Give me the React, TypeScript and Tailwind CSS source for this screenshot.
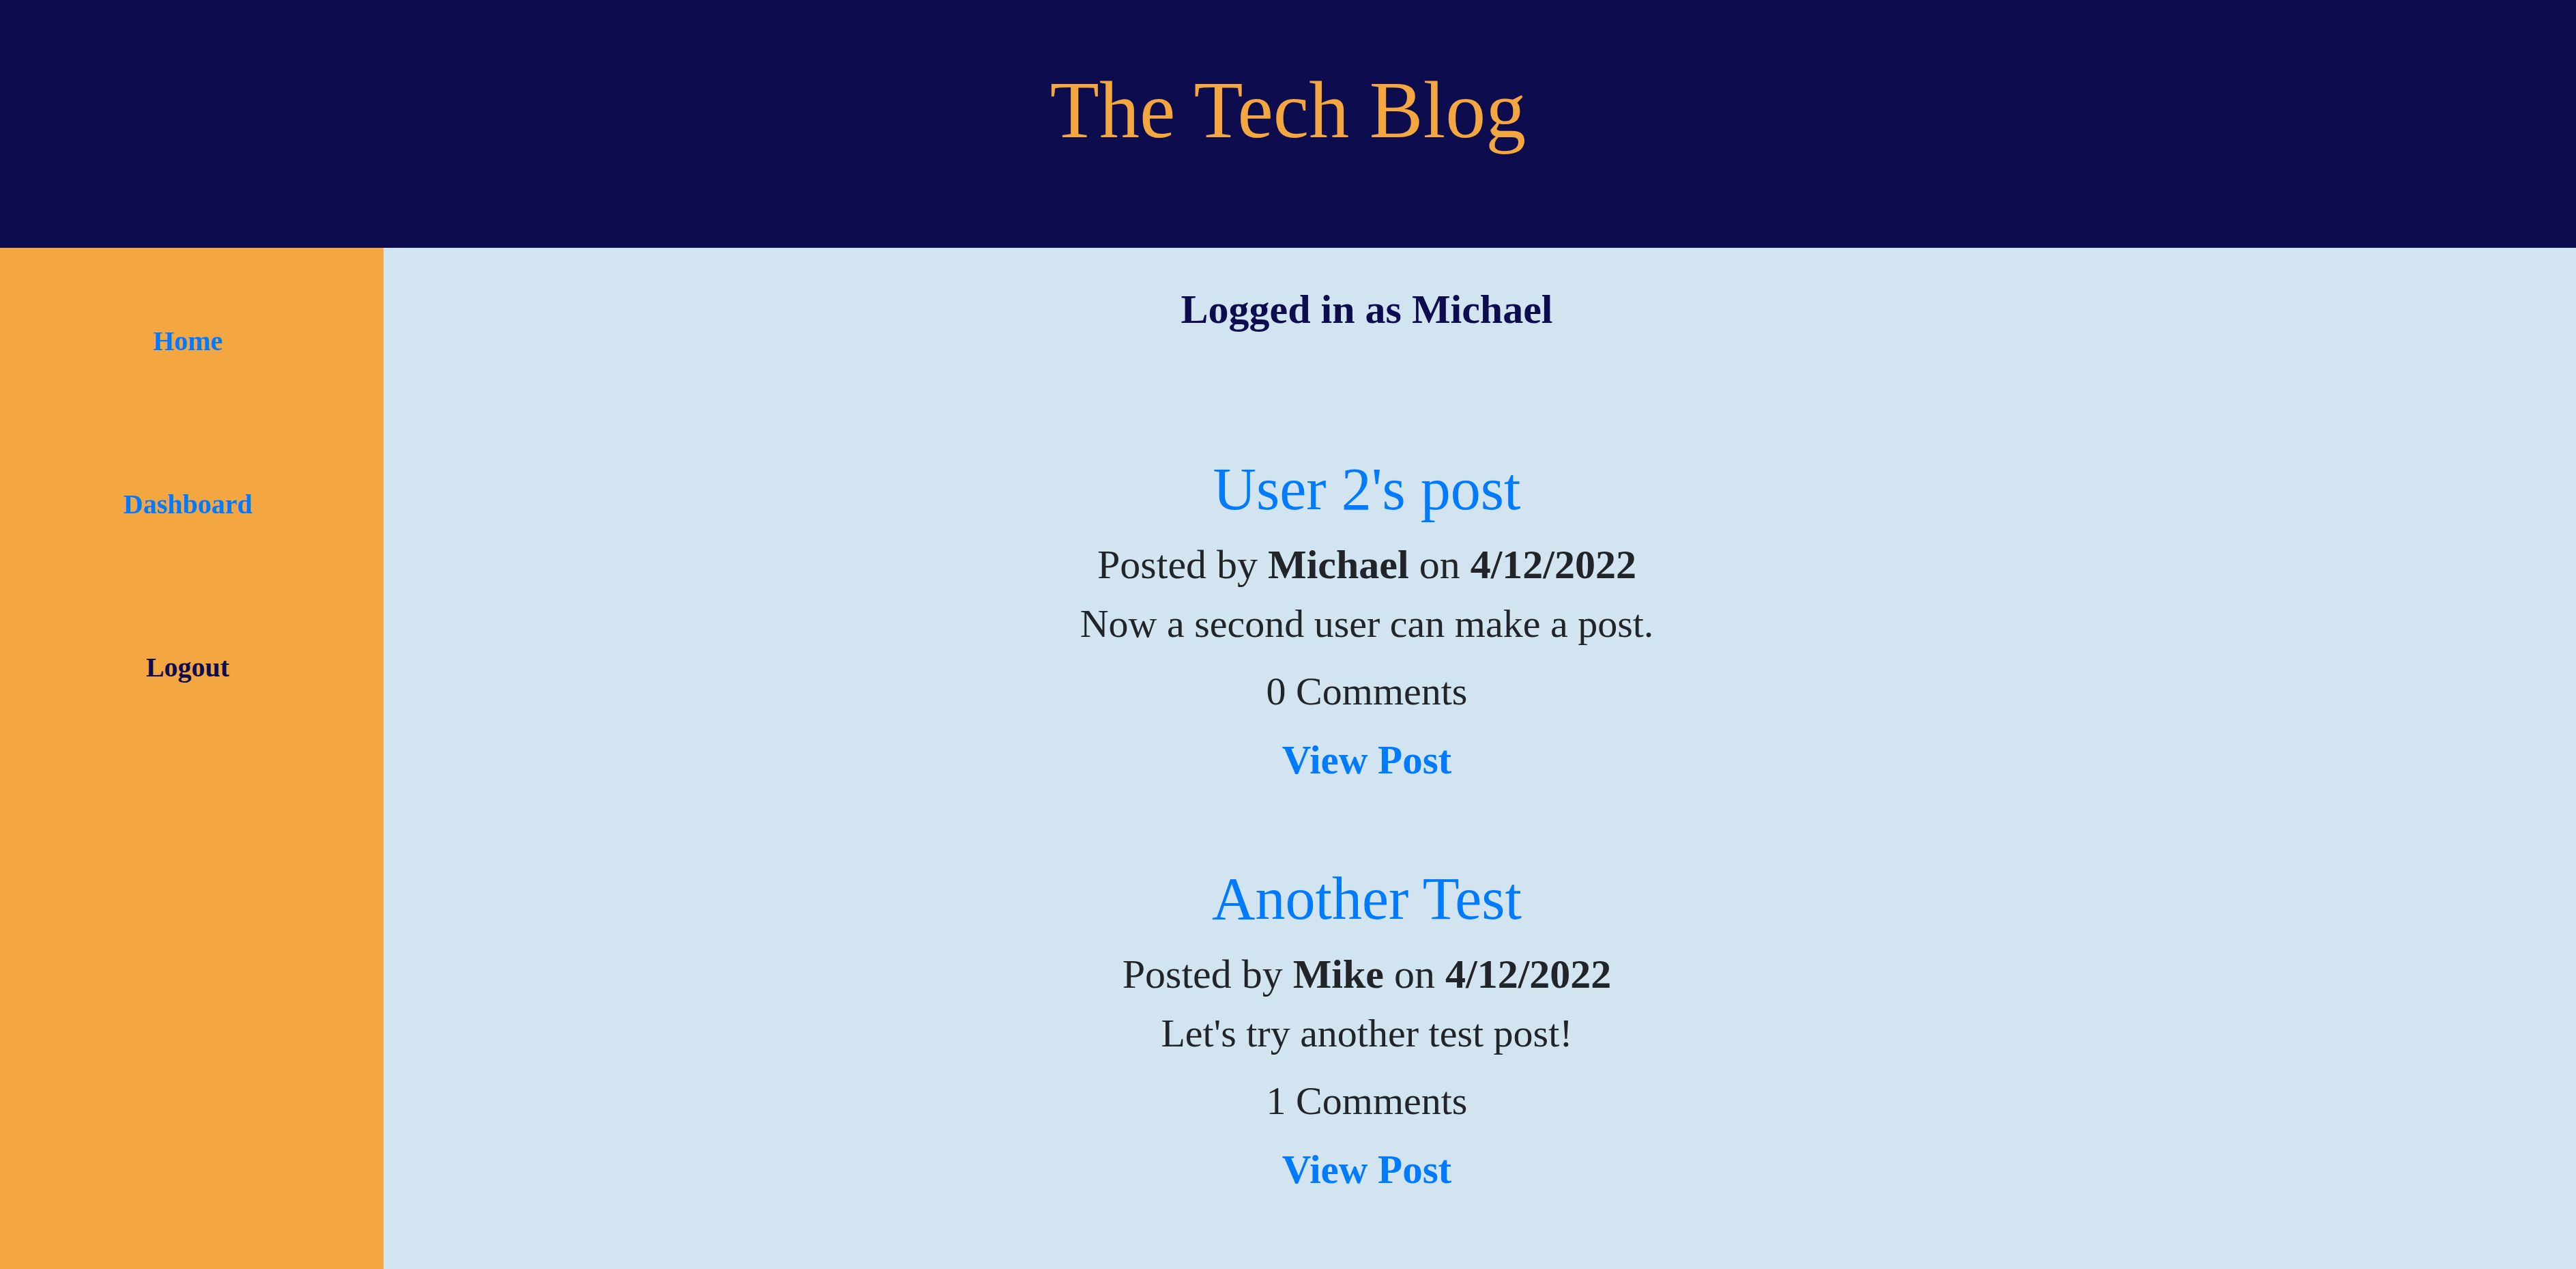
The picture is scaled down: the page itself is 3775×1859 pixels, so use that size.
import React from "react";

const posts = [
  {
    title: "User 2's post",
    author: "Michael",
    date: "4/12/2022",
    body: "Now a second user can make a post.",
    comments: 0,
  },
  {
    title: "Another Test",
    author: "Mike",
    date: "4/12/2022",
    body: "Let's try another test post!",
    comments: 1,
  },
];

export default function App() {
  return (
    <div className="min-h-[1859px] flex flex-col font-['Liberation_Serif',_serif] bg-[#d2e4f0]">
      <header className="h-[363px] shrink-0 bg-[#0d0c4e] pt-[103px] text-center">
        <h1 className="text-[118px] leading-[118px] text-[#f4a640] font-normal">The Tech Blog</h1>
      </header>
      <div className="flex flex-1">
        <nav className="w-[562px] shrink-0 bg-[#f4a640] pt-[117px] pr-[12px] flex flex-col items-center gap-[199px]">
          <a href="#" className="text-[40px] leading-[40px] font-bold text-[#007bff]">Home</a>
          <a href="#" className="text-[40px] leading-[40px] font-bold text-[#007bff]">Dashboard</a>
          <a href="#" className="text-[40px] leading-[40px] font-bold text-[#0d0c4e]">Logout</a>
        </nav>
        <main className="flex-1 pr-[331px] pt-[60px] text-center text-[#212529]">
          <h2 className="text-[60px] leading-[60px] font-bold text-[#0d0c4e]">Logged in as Michael</h2>
          <div className="mt-[190px] flex flex-col gap-[131px]">
            {posts.map((p) => (
              <article key={p.title} className="flex flex-col items-center">
                <a href="#" className="text-[88px] leading-[88px] text-[#007bff] mb-[37px]">{p.title}</a>
                <p className="text-[60px] leading-[58px] mb-[29px]">
                  Posted by <span className="font-bold">{p.author}</span> on <span className="font-bold">{p.date}</span>
                </p>
                <p className="text-[58px] leading-[58px] mb-[41px]">{p.body}</p>
                <p className="text-[58px] leading-[58px] mb-[42px]">{p.comments} Comments</p>
                <a href="#" className="text-[59px] leading-[58px] font-bold text-[#007bff]">View Post</a>
              </article>
            ))}
          </div>
        </main>
      </div>
    </div>
  );
}
